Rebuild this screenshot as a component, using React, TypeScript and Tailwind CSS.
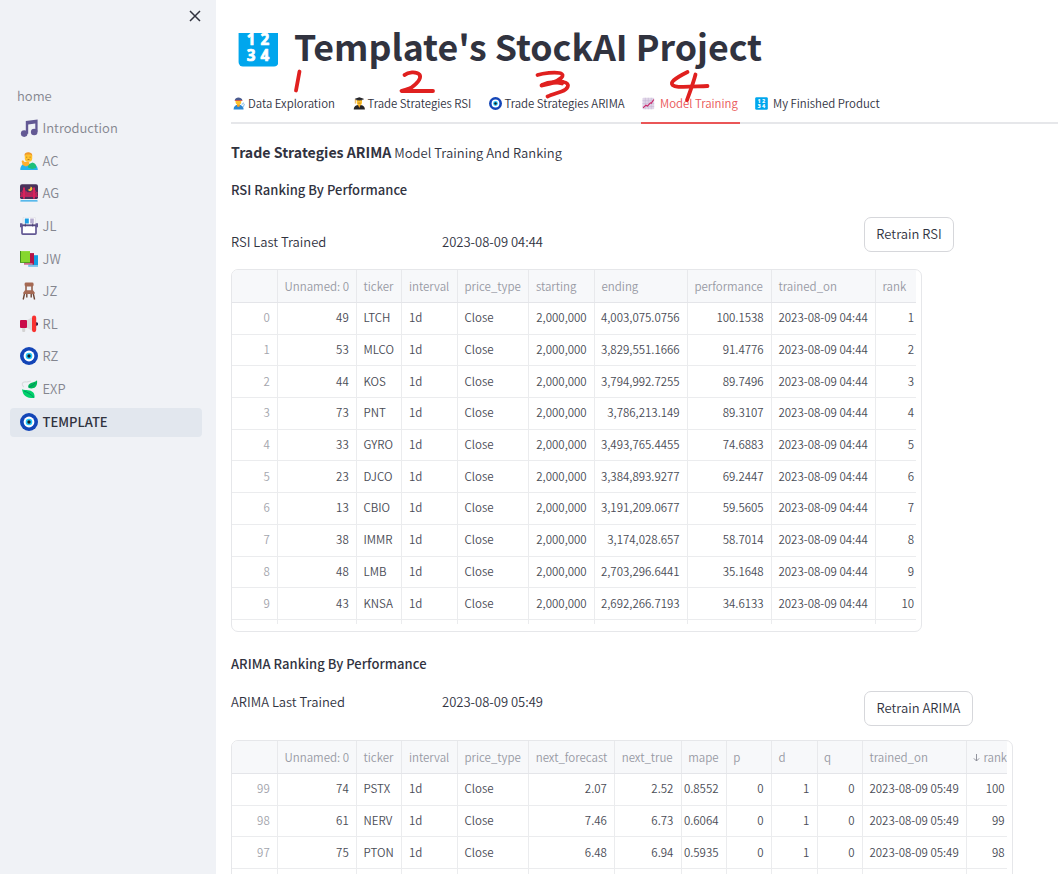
import React from "react";

type IconProps = { className?: string };

const MusicIcon = ({ className }: IconProps) => (
  <svg viewBox="0 0 18 18" className={className}>
    <path d="M5.8 2 17.600.4v12.400h-2.300V4.600l-7.100.9v9.300H5.800z" fill="#635994" />
    <circle cx="4.200" cy="14.600" r="3.300" fill="#635994" />
    <circle cx="14.200" cy="13" r="3.300" fill="#635994" />
  </svg>
);

const PersonIcon = ({ className }: IconProps) => (
  <svg viewBox="0 0 18 18" className={className}>
    <path d="M.3 18c0-3.600 2-6 4.500-6.400l4 1.200 4-1.400c3 .6 5 3 5 6.600z" fill="#26b4ee" />
    <path d="M8 12.600 12.500 10.400c3 .6 4 3 3.600 5.600l-4 1L8 15.500z" fill="#1fc07a" />
    <rect x="4.800" y=".8" width="7.400" height="9" rx="3.500" fill="#ffc22e" />
    <path d="M1.600 9 3 8.200 4.600 10l3.200-.4 1.600 1-.4 2.400-3 1.600L2.600 13z" fill="#ffb02e" />
    <path d="M4.400 3.800C4.400 1 6.200.2 8.200.2s4 .8 4.200 3.600l-2-1.400H6.200z" fill="#f0982b" />
    <path d="M6.200 5.200h1m2.400 0h1M7.600 7.500h1.800" stroke="#a0661c" strokeWidth=".8" />
  </svg>
);

const BridgeIcon = ({ className }: IconProps) => (
  <svg viewBox="0 0 18 18" className={className}>
    <rect width="18" height="15" y=".2" rx="2" fill="#48325a" />
    <path d="M.5 9.500C3 9 4 7 4 5c1 3 3 4.500 5 4.500S13 8 14 5c0 2 1 4 3.500 4.500V12H.5z" fill="#d8235c" opacity=".45" />
    <path d="M10.600 2.400a2.400 2.400 0 1 1-2.800 3.200c1.800 0 2.800-1.400 2.800-3.200z" fill="#f9c23c" />
    <path d="M4 3.500v11.300M14 3.500v11.300" stroke="#d8235c" strokeWidth="2" />
    <path d="M.2 9C2 8.500 3.500 6.500 4 4.500 5 7.500 7 9 9 9s4-1.500 5-4.500c.5 2 2 4 3.800 4.500" stroke="#d8235c" strokeWidth="1" fill="none" />
    <path d="M0 12.200h18M2 8.500v4M6 8v4M8 9v3M10 9v3M12 8v4M16 8.500v4" stroke="#d8235c" strokeWidth="1.100" />
    <path d="M0 15h18v1H0z" fill="#f0f2f6" />
    <path d="M1 16.900h16" stroke="#26a6e8" strokeWidth="1.400" strokeLinecap="round" />
  </svg>
);

const CardBoxIcon = ({ className }: IconProps) => (
  <svg viewBox="0 0 18 18" className={className}>
    <rect x="3.200" y=".2" width="12" height="9" rx=".8" fill="#fff" stroke="#c9cbd6" strokeWidth=".5" />
    <path d="M4.800 1.500h4v5h-4z" fill="#1b9fe4" />
    <path d="M10.200 1.500h3.600v5h-3.600z" fill="#b4accf" />
    <path d="M2 8.500h14v7.800q0 .8-.8.8H2.800q-.8 0-.8-.8z" fill="#fff" stroke="#635994" strokeWidth="1.700" />
    <path d="M2 8h14M5.300 6.500v3M12.700 6.500v3" stroke="#463b70" strokeWidth=".9" />
    <path d="M0 6.200h2.400v4H0zM15.600 6.200H18v4h-2.400z" fill="#635994" />
  </svg>
);

const BooksIcon = ({ className }: IconProps) => (
  <svg viewBox="0 0 18 18" className={className}>
    <path d="M8.500 5.200h9.500v11.600H8.500z" fill="#139ee2" />
    <path d="M8.500 15.300H18v1.400H8.500z" fill="#a9d5ee" />
    <path d="M4 3.100h10v11.500H4z" fill="#b51446" />
    <path d="M4 13.400h8.600v1.200H4z" fill="#dba7b9" />
    <path d="M0 1.100h10v11.700H0z" fill="#86d72f" />
    <path d="M0 1.100h1v11.700H0zM0 11.900h10v.9H0z" fill="#44911b" />
  </svg>
);

const ChairIcon = ({ className }: IconProps) => (
  <svg viewBox="0 0 18 18" className={className}>
    <path d="M4.800 10.500 3.200 17.500M13 10.500l1.600 7M6.800 11v4.500M11.200 11v4.500" stroke="#6d4534" strokeWidth="1.400" />
    <path d="M6 3v6M12 3v6" stroke="#8b5844" strokeWidth="1.500" />
    <rect x="4.600" y=".5" width="9" height="4" rx="1.400" fill="#a56953" />
    <path d="M5 8.200h8l1.800 2.600q.3 1.200-1 1.200H4.200q-1.300 0-1-1.200z" fill="#a56953" />
  </svg>
);

const MegaphoneIcon = ({ className }: IconProps) => (
  <svg viewBox="0 0 18 18" className={className}>
    <path d="M2.200 11.500h3v4.600q0 1-1 1h-1q-1 0-1-1z" fill="#d3d3d3" />
    <path d="M6 5.800 12.500 2v14L6 12.200z" fill="#dcdcdf" />
    <rect x="0" y="5" width="7" height="8" rx="1" fill="#ca0b4a" />
    <circle cx="16.400" cy="9" r="1.700" fill="#321b41" />
    <rect x="12" y=".6" width="4.200" height="16.600" rx="2.100" fill="#f8312f" />
  </svg>
);

const NazarIcon = ({ className }: IconProps) => (
  <svg viewBox="0 0 18 18" className={className}>
    <circle cx="9" cy="9" r="9" fill="#1345b7" />
    <circle cx="9" cy="9" r="5.400" fill="#fff" />
    <circle cx="9" cy="9" r="3.300" fill="#26c9fc" />
    <circle cx="9" cy="9" r="1.700" fill="#1c1c1c" />
  </svg>
);

const LeavesIcon = ({ className }: IconProps) => (
  <svg viewBox="0 0 18 18" className={className}>
    <path d="M3.800 7C1 4.500 2 2 5.500 1.800M5 1.600C7 3 9 1 11 1" stroke="#d8dade" strokeWidth="1.100" fill="none" />
    <path d="M8.200 7.500C8 4 10.500 3 12.500 2.500 15 1.900 16 1.200 17 .2c.6 4-.6 7-3.400 7.900-2 .6-3.800.4-5.400-.6z" fill="#00b85a" />
    <path d="M2 9.200c4 1.300 8.300.3 11 3 1.700 1.800 1.600 4 1.500 5.600-4.500.7-8.500-.3-10.500-3C2.800 13 2.500 11 2 9.200z" fill="#00d26a" />
    <path d="M4 11c3.500 1.200 6.500 3 10 6.500M9 7c2-.6 4.500-2 6-4" stroke="#008463" strokeWidth=".8" fill="none" />
  </svg>
);

const WorkerIcon = ({ className }: IconProps) => (
  <svg viewBox="0 0 14 14" className={className}>
    <path d="M.6 13.500c0-3.500 2-5.200 5.200-5.200s5.600 1.700 5.600 5.200z" fill="#2b86d1" />
    <path d="M4.300 7.500h3v2.400l-1.500 1-1.500-1z" fill="#f59f1d" />
    <circle cx="5.800" cy="5.200" r="3.100" fill="#ffc22e" />
    <path d="M1.800 3.700C2.200 1.300 4 .5 5.800.5s4 .8 4.400 3.200z" fill="#4b5b8f" />
    <path d="M2 3.400h8v.9H2z" fill="#d9504b" />
    <path d="m9.300 8 2.500-1.700M10.700 11l1.700-3.500" stroke="#9ec9ea" strokeWidth="1.300" />
  </svg>
);

const GraduateIcon = ({ className }: IconProps) => (
  <svg viewBox="0 0 14 14" className={className}>
    <path d="M.8 13.500c0-3.400 2.400-4.900 6-4.900s6 1.500 6 4.900z" fill="#242427" />
    <path d="M5.200 8h3.200L6.800 11.800z" fill="#f3a01e" />
    <path d="M4 3.200h5.700v3c0 4-5.700 4-5.700 0z" fill="#ffc22e" />
    <path d="M6.800.4 11.500 1.800v.8L6.800 3.600 2.100 2.600v-.8z" fill="#242427" />
    <path d="M3.800 2.600h6v1H3.800z" fill="#35353a" />
    <path d="M2.500 2.600v4.500" stroke="#e39a22" strokeWidth=".9" />
    <path d="M5.500 6.600h2.700" stroke="#8b5b25" strokeWidth=".7" />
  </svg>
);

const ChartIcon = ({ className }: IconProps) => (
  <svg viewBox="0 0 14 14" className={className}>
    <rect x=".5" y=".8" width="12.600" height="12.400" rx="1" fill="#e0d5e8" />
    <path d="M3.600.8v12.400M6.800.8v12.400M10 .8v12.400M.5 4h12.600M.5 7.100h12.600M.5 10.200h12.600" stroke="#c5b5d3" strokeWidth=".6" />
    <path d="m1.200 11.800 3-3 1.700.9L9 6.300l1 .4 2.700-4" stroke="#ca2467" strokeWidth="1.200" fill="none" />
  </svg>
);

const NumbersIcon = ({ className }: IconProps) => (
  <svg viewBox="0 0 14 14" className={className}>
    <rect x=".2" y=".2" width="13.600" height="13.600" rx="1.500" fill="#00a6ed" />
    <g fill="#fff" stroke="#fff" strokeWidth=".25" strokeLinejoin="round" fontFamily="Noto Sans" fontWeight="700" fontSize="5.200" textAnchor="middle">
      <text x="4.500" y="6.400">1</text>
      <text x="9.200" y="6.400">2</text>
      <text x="4.500" y="12">3</text>
      <text x="9.200" y="12">4</text>
    </g>
  </svg>
);

const navItems = [
  { label: "Introduction", Icon: MusicIcon },
  { label: "AC", Icon: PersonIcon },
  { label: "AG", Icon: BridgeIcon },
  { label: "JL", Icon: CardBoxIcon },
  { label: "JW", Icon: BooksIcon },
  { label: "JZ", Icon: ChairIcon },
  { label: "RL", Icon: MegaphoneIcon },
  { label: "RZ", Icon: NazarIcon },
  { label: "EXP", Icon: LeavesIcon },
  { label: "TEMPLATE", Icon: NazarIcon, active: true },
];

const tabs = [
  { label: "Data Exploration", Icon: WorkerIcon, box: "w-[121px] pl-[2px]", gap: "ml-[2px]" },
  { label: "Trade Strategies RSI", Icon: GraduateIcon, box: "w-[136px] pl-[1px]", gap: "ml-[1.500px]" },
  { label: "Trade Strategies ARIMA", Icon: NazarIcon, box: "w-[153px] pl-[1px]", gap: "ml-[2.500px]" },
  { label: "Model Training", Icon: ChartIcon, box: "w-[99px] pl-[1px]", gap: "ml-[5px]", active: true },
  { label: "My Finished Product", Icon: NumbersIcon, box: "w-[140px] ml-[14px] pl-[1px]", gap: "ml-[5px]" },
];

type Column = { title: string; width: string; left?: boolean; sorted?: boolean };

const rsiColumns: Column[] = [
  { title: "", width: "w-[46px]" },
  { title: "Unnamed: 0", width: "w-[79px]" },
  { title: "ticker", width: "w-[45.400px]", left: true },
  { title: "interval", width: "w-[55.600px]", left: true },
  { title: "price_type", width: "w-[71.400px]", left: true },
  { title: "starting", width: "w-[65.600px]" },
  { title: "ending", width: "w-[93px]" },
  { title: "performance", width: "w-[84px]" },
  { title: "trained_on", width: "w-[104px]", left: true },
  { title: "rank", width: "w-[45.500px]" },
];

const rsiRows = [
  ["0", "49", "LTCH", "1d", "Close", "2,000,000", "4,003,075.0756", "100.1538", "2023-08-09 04:44", "1"],
  ["1", "53", "MLCO", "1d", "Close", "2,000,000", "3,829,551.1666", "91.4776", "2023-08-09 04:44", "2"],
  ["2", "44", "KOS", "1d", "Close", "2,000,000", "3,794,992.7255", "89.7496", "2023-08-09 04:44", "3"],
  ["3", "73", "PNT", "1d", "Close", "2,000,000", "3,786,213.149", "89.3107", "2023-08-09 04:44", "4"],
  ["4", "33", "GYRO", "1d", "Close", "2,000,000", "3,493,765.4455", "74.6883", "2023-08-09 04:44", "5"],
  ["5", "23", "DJCO", "1d", "Close", "2,000,000", "3,384,893.9277", "69.2447", "2023-08-09 04:44", "6"],
  ["6", "13", "CBIO", "1d", "Close", "2,000,000", "3,191,209.0677", "59.5605", "2023-08-09 04:44", "7"],
  ["7", "38", "IMMR", "1d", "Close", "2,000,000", "3,174,028.657", "58.7014", "2023-08-09 04:44", "8"],
  ["8", "48", "LMB", "1d", "Close", "2,000,000", "2,703,296.6441", "35.1648", "2023-08-09 04:44", "9"],
  ["9", "43", "KNSA", "1d", "Close", "2,000,000", "2,692,266.7193", "34.6133", "2023-08-09 04:44", "10"],
  ["", "", "", "", "", "", "", "", "", ""],
];

const arimaColumns: Column[] = [
  { title: "", width: "w-[46px]" },
  { title: "Unnamed: 0", width: "w-[79px]" },
  { title: "ticker", width: "w-[45.400px]", left: true },
  { title: "interval", width: "w-[55.600px]", left: true },
  { title: "price_type", width: "w-[71.200px]", left: true },
  { title: "next_forecast", width: "w-[86px]" },
  { title: "next_true", width: "w-[66.500px]" },
  { title: "mape", width: "w-[45.200px]" },
  { title: "p", width: "w-[45.100px]" },
  { title: "d", width: "w-[45.600px]" },
  { title: "q", width: "w-[45.400px]" },
  { title: "trained_on", width: "w-[104px]", left: true },
  { title: "rank", width: "w-[45px]", sorted: true },
];

const arimaRows = [
  ["99", "74", "PSTX", "1d", "Close", "2.07", "2.52", "0.8552", "0", "1", "0", "2023-08-09 05:49", "100"],
  ["98", "61", "NERV", "1d", "Close", "7.46", "6.73", "0.6064", "0", "1", "0", "2023-08-09 05:49", "99"],
  ["97", "75", "PTON", "1d", "Close", "6.48", "6.94", "0.5935", "0", "1", "0", "2023-08-09 05:49", "98"],
  ["", "", "", "", "", "", "", "", "", "", "", "", ""],
];

function DataGrid({ columns, rows, frame, view }: { columns: Column[]; rows: string[][]; frame: string; view: string }) {
  return (
    <div className={`overflow-hidden rounded-[7px] border border-[#e6e7ea] ${frame}`}>
      <div className={`overflow-hidden text-[11.500px] text-[#4a4c56] ${view}`}>
        <div className="flex h-[33px] border-b border-[#e4e5e9] bg-[#f7f8fa] text-[#979aa4]">
          {columns.map((c, i) => (
            <div
              key={i}
              className={`flex shrink-0 items-center whitespace-nowrap pl-[6.500px] leading-4 ${c.width} ${i < columns.length - 1 ? "border-r border-[#e8e9ec]" : ""}`}
            >
              {c.sorted && (
                <svg viewBox="0 0 8 10" className="mr-[3px] h-[9px] w-[7px] shrink-0">
                  <path d="M4 1v8M1 6l3 3 3-3" fill="none" stroke="#8c8f99" strokeWidth="1.100" />
                </svg>
              )}
              {c.title}
            </div>
          ))}
        </div>
        {rows.map((row, r) => (
          <div key={r} className="flex h-[31.700px] border-b border-[#ebecee]">
            {row.map((cell, i) => (
              <div
                key={i}
                className={`flex shrink-0 items-center whitespace-nowrap pb-[2px] pl-[6.500px] pr-[7.300px] leading-4 ${columns[i].width} ${columns[i].left ? "justify-start" : "justify-end"} ${i === 0 ? "text-[#a3a5ad]" : ""} ${i < row.length - 1 ? "border-r border-[#ebecee]" : ""}`}
              >
                {cell}
              </div>
            ))}
          </div>
        ))}
      </div>
    </div>
  );
}

function Sidebar() {
  return (
    <aside className="h-full w-[216px] shrink-0 bg-[#f0f2f6]">
      <div className="flex h-[81.700px] justify-end pr-[15px] pt-[10px]">
        <svg viewBox="0 0 12 12" className="h-[12px] w-[12px]">
          <path d="m1 1 10 10M11 1 1 11" stroke="#31333f" strokeWidth="1.500" />
        </svg>
      </div>
      <nav className="flex flex-col gap-[3.600px] pl-[10px] pr-[14px] text-[13px] text-[#84868f]">
        <div className="flex h-[29px] items-center pb-[1px] pl-[7px] leading-5">home</div>
        {navItems.map(({ label, Icon, active }) => (
          <div
            key={label}
            className={`flex h-[29px] items-center gap-[4.500px] rounded-[4px] pl-[10px] leading-5 ${active ? "bg-[#e2e7ee] font-medium text-[#31333f]" : "pb-[1px]"}`}
          >
            <Icon className="h-[18px] w-[18px] shrink-0" />
            <span>{label}</span>
          </div>
        ))}
      </nav>
    </aside>
  );
}

function InkNotes() {
  return (
    <svg viewBox="0 0 480 60" className="pointer-events-none absolute left-[63px] top-[60px] h-[60px] w-[480px]" fill="none" stroke="#e0201f" strokeWidth="3.800" strokeLinecap="round" strokeLinejoin="round">
      <path d="M20.500 11.500 17 30.500" />
      <path d="M125.500 15C129 12 137 11 140.500 14.500c2.500 4-4 10-8 13-2 1.500-8 2.500-10 3.500h31.500" />
      <path d="M258.500 15c6-2 17-3 22-2 8 2-1 8-8 10-4 1.200-8 2-10 2.500 7-1 15-4.500 22-3.500 8 1.500 4 7.500-2 9.500-5 1.800-10 3-14 5" />
      <path d="M263 25c7-3.500 13-3.500 20-1.500" />
      <path d="M408.500 12c-4 2-10 5-14 8.500-4 4 0 6 5 6.300 9 .5 19-.5 29-.8" />
      <path d="M416.500 14.500c-2 8-5 16-8.500 25.500" />
    </svg>
  );
}

export default function App() {
  return (
    <div className="flex h-[874px] w-[1058px] overflow-hidden bg-white font-['Noto_Sans_CJK_SC','Noto_Sans',sans-serif] text-[13px] font-[350] text-[#31333f]">
      <Sidebar />
      <main className="relative min-w-0 flex-1 pl-[15px]">
        <header className="flex h-[90px] items-start pt-[26px]">
          <div className="ml-[7px] mt-[7px] flex h-[34px] w-[40px] items-end overflow-hidden">
            <NumbersIcon className="h-[41px] w-[41px] shrink-0" />
          </div>
          <h1 className="ml-[16px] whitespace-nowrap text-[35.700px] font-bold leading-[40px]">Template's StockAI Project</h1>
        </header>
        <div className="flex h-[34px] border-b-2 border-[#e6e7ea] text-[11.400px]">
          {tabs.map(({ label, Icon, box, gap, active }) => (
            <div key={label} className={`flex h-[34px] shrink-0 items-center whitespace-nowrap ${box} ${active ? "border-b-2 border-[#ea5657] pb-[6px] text-[#ea5657]" : "pb-[8px]"}`}>
              <Icon className="h-[13px] w-[13px] shrink-0" />
              <span className={`leading-4 ${gap}`}>{label}</span>
            </div>
          ))}
        </div>
        <p className="mt-[18px] h-5 whitespace-nowrap leading-5">
          <strong className="text-[14.150px] font-bold">Trade Strategies ARIMA</strong> <span className="tracking-[0.020px]">Model Training And Ranking</span>
        </p>
        <h2 className="mt-[18px] h-5 font-medium leading-5 tracking-[0.030px]">RSI Ranking By Performance</h2>
        <div className="mt-[17px] flex h-[35px]">
          <span className="mt-[15px] w-[211px] leading-5">RSI Last Trained</span>
          <span className="mt-[15px] w-[422px] leading-5">2023-08-09 04:44</span>
          <button className="flex h-[35px] w-[90px] items-center justify-center rounded-[7px] border border-[#d6d7db] pb-[2px] leading-5">Retrain RSI</button>
        </div>
        <DataGrid columns={rsiColumns} rows={rsiRows} frame="mt-[17px] h-[363px] w-[691px]" view="h-[354px] w-[684px]" />
        <h2 className="mt-[22px] h-5 font-medium leading-5 tracking-[0.030px]">ARIMA Ranking By Performance</h2>
        <div className="mt-[17px] flex h-[35px]">
          <span className="mt-[1px] w-[211px] leading-5">ARIMA Last Trained</span>
          <span className="mt-[1px] w-[422px] leading-5">2023-08-09 05:49</span>
          <button className="flex h-[35px] w-[109px] items-center justify-center rounded-[7px] border border-[#d6d7db] pb-[2px] leading-5">Retrain ARIMA</button>
        </div>
        <DataGrid columns={arimaColumns} rows={arimaRows} frame="mt-[14px] h-[200px] w-[782px]" view="h-[190px] w-[775px]" />
        <InkNotes />
      </main>
    </div>
  );
}
